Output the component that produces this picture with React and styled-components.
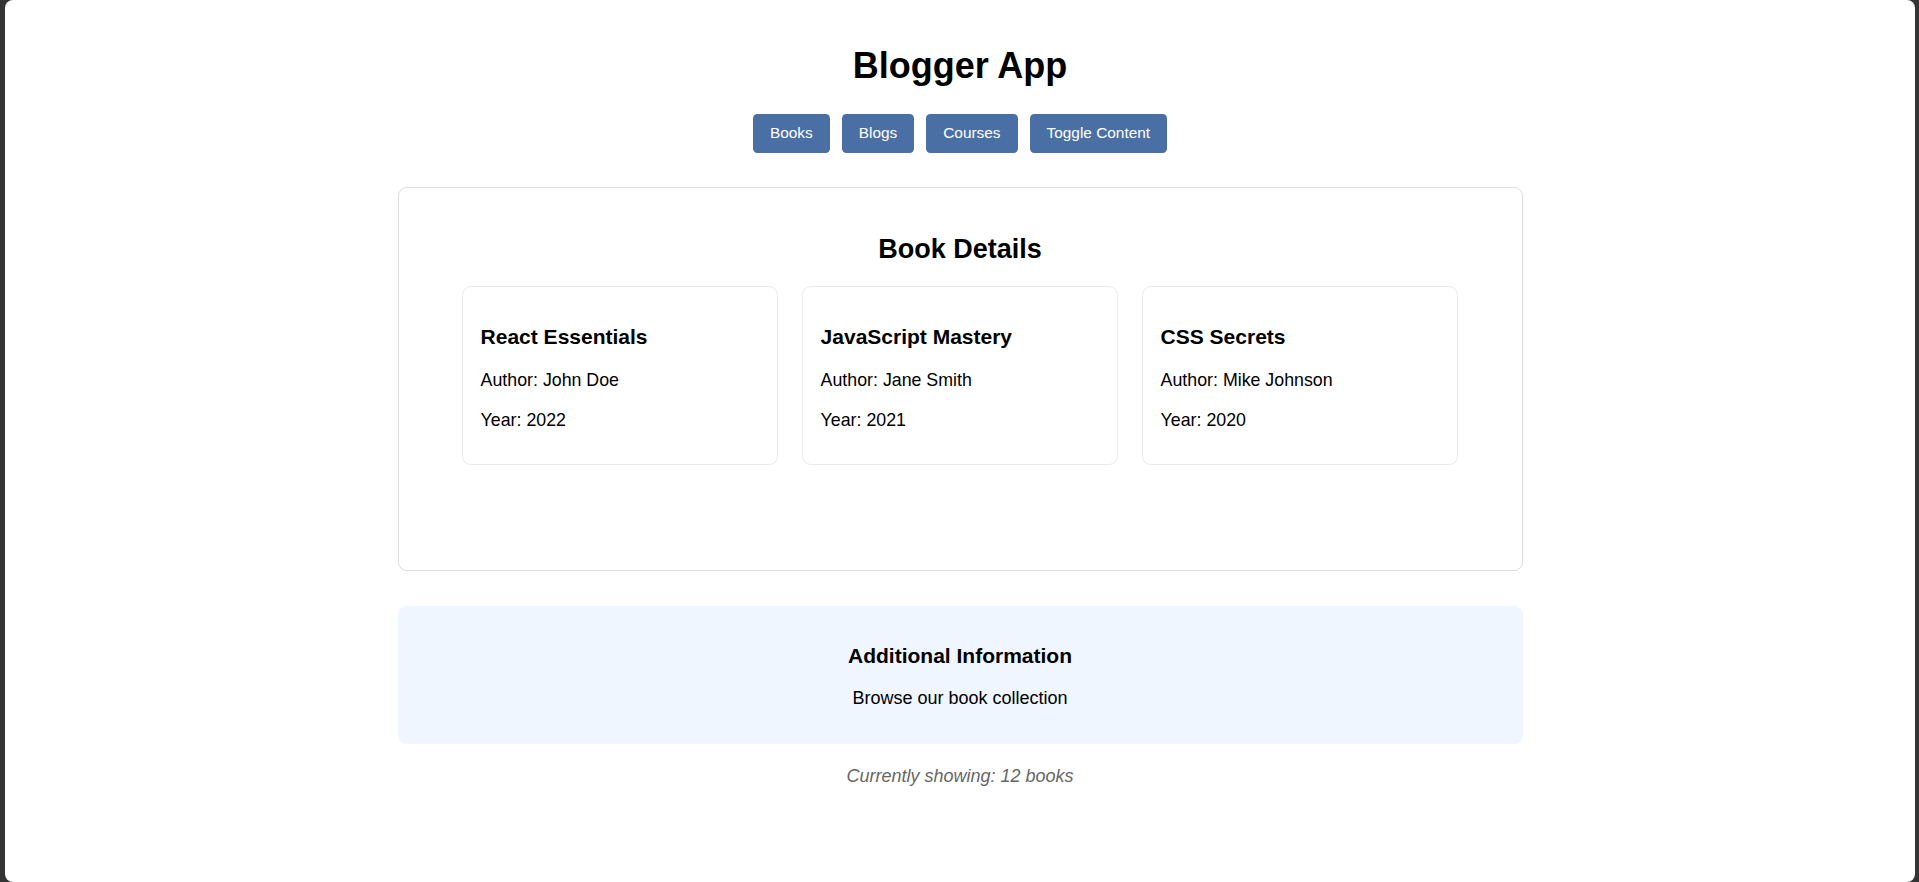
import React from 'react';
import styled, { createGlobalStyle } from 'styled-components';

const books = [
    { title: 'React Essentials', author: 'John Doe', year: 2022 },
    { title: 'JavaScript Mastery', author: 'Jane Smith', year: 2021 },
    { title: 'CSS Secrets', author: 'Mike Johnson', year: 2020 },
];

const navItems = ['Books', 'Blogs', 'Courses', 'Toggle Content'];

export default function App() {
    return (
        <>
            <GlobalStyle />
            <Window>
                <Title>Blogger App</Title>
                <Nav>
                    { navItems.map((item) => (
                        <NavButton key={ item }>{ item }</NavButton>
                    )) }
                </Nav>
                <Panel>
                    <PanelTitle>Book Details</PanelTitle>
                    <BookGrid>
                        { books.map((book) => (
                            <BookCard key={ book.title }>
                                <h3>{ book.title }</h3>
                                <p>Author: { book.author }</p>
                                <p>Year: { book.year }</p>
                            </BookCard>
                        )) }
                    </BookGrid>
                </Panel>
                <InfoBox>
                    <h3>Additional Information</h3>
                    <p>Browse our book collection</p>
                </InfoBox>
                <Footer>Currently showing: 12 books</Footer>
            </Window>
        </>
    );
}

const GlobalStyle = createGlobalStyle`
    html, body {
        margin: 0;
        padding: 0;
        background: #343434;
        font-family: "Liberation Sans", Arial, sans-serif;
        color: #000;
    }
`;

const Window = styled.div`
    margin: 0 4px 0 5px;
    height: 882px;
    padding-top: 22px;
    box-sizing: border-box;
    background: #fff;
    border-radius: 8px;
    overflow: hidden;
`;

const Title = styled.h1`
    margin: 23.2px 0 26.5px;
    font-size: 36px;
    font-weight: bold;
    text-align: center;
    line-height: normal;
`;

const Nav = styled.div`
    display: flex;
    justify-content: center;
    gap: 12px;
`;

const NavButton = styled.button`
    height: 39px;
    padding: 0 17px;
    border: none;
    border-radius: 4.4px;
    background: #4a6fa5;
    color: #fff;
    font-family: inherit;
    font-size: 15.4px;
    cursor: pointer;
`;

const Panel = styled.section`
    width: 1125px;
    margin: 34px auto 0;
    padding: 46px 22px 105.5px;
    box-sizing: border-box;
    border: 1px solid #ddd;
    border-radius: 8.8px;
`;

const PanelTitle = styled.h2`
    margin: 0 0 21px;
    font-size: 27px;
    text-align: center;
    line-height: normal;
`;

const BookGrid = styled.div`
    display: grid;
    grid-template-columns: repeat(3, 316px);
    gap: 24px;
    justify-content: center;
`;

const BookCard = styled.div`
    padding: 38px 17.6px 32.6px;
    box-sizing: border-box;
    border: 1px solid #eaeaea;
    border-radius: 8.8px;
    h3 {
        margin: 0 0 20px;
        font-size: 21px;
        line-height: normal;
    }
    p {
        margin: 0;
        font-size: 17.8px;
        line-height: 22.4px;
    }
    p + p {
        margin-top: 17.6px;
    }
`;

const InfoBox = styled.section`
    width: 1125px;
    margin: 35px auto 0;
    padding: 37.7px 22px 34.5px;
    box-sizing: border-box;
    background: #eff6ff;
    border-radius: 8.8px;
    text-align: center;
    h3 {
        margin: 0 0 20.6px;
        font-size: 21px;
        line-height: normal;
    }
    p {
        margin: 0;
        font-size: 18px;
        line-height: normal;
    }
`;

const Footer = styled.p`
    margin: 22px 0 0;
    font-size: 18px;
    font-style: italic;
    color: #666;
    text-align: center;
`;
